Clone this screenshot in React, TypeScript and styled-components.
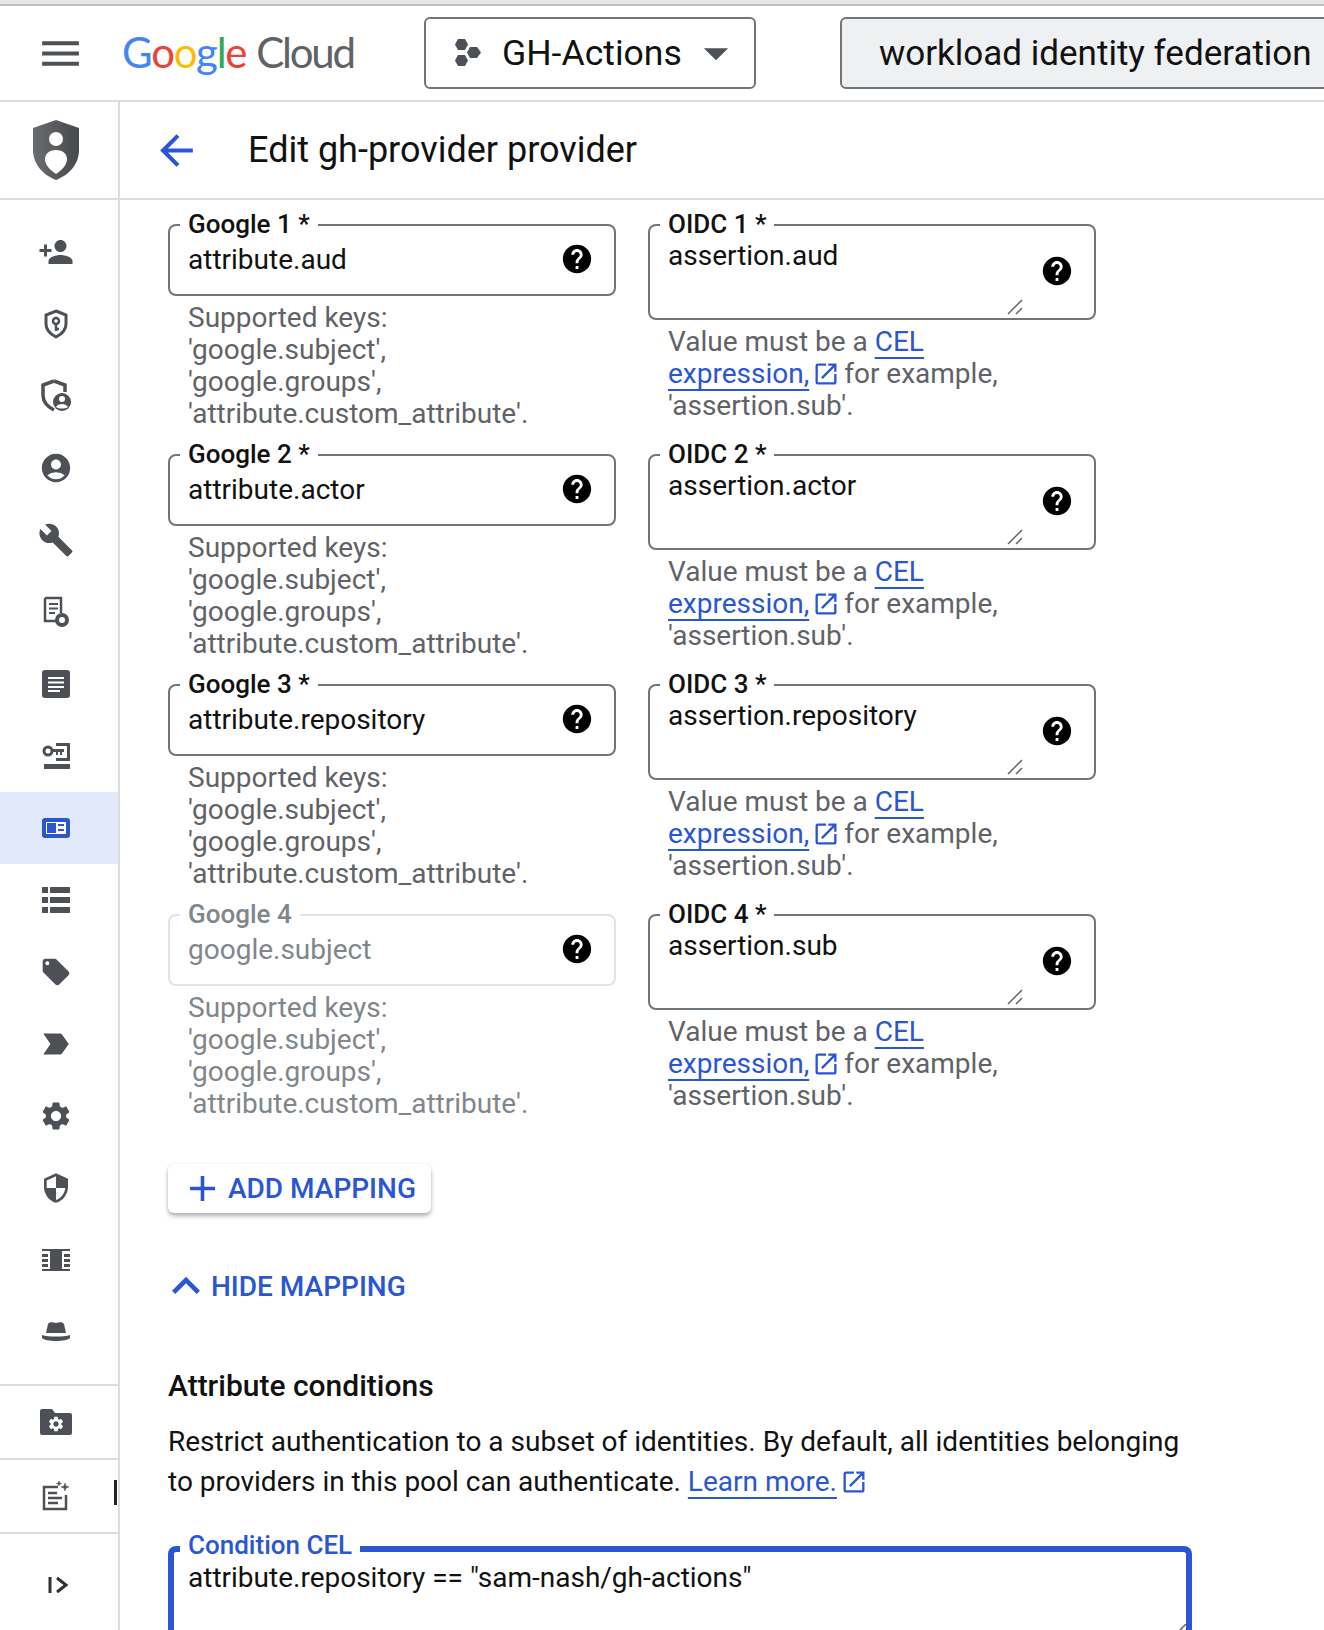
import styled, { createGlobalStyle } from "styled-components";
import {
  MdAccountCircle,
  MdAdd,
  MdArrowBack,
  MdArrowDropDown,
  MdBuild,
  MdExpandLess,
  MdHelp,
  MdLabelImportant,
  MdLocalOffer,
  MdMenu,
  MdOpenInNew,
  MdPersonAdd,
  MdSecurity,
  MdSettings,
} from "react-icons/md";

const BLUE = "#2a56d3";
const GREY = "#5f6368";
const ICON = "#4d5156";

const GlobalStyle = createGlobalStyle`
  html, body {
    margin: 0;
    padding: 0;
    background: #fff;
    font-family: Roboto, "Liberation Sans", sans-serif;
    color: #111;
  }
`;

const Page = styled.div`
  width: 1324px;
  height: 1630px;
  overflow: hidden;
  display: flex;
  flex-direction: column;
  position: relative;
`;

const TopStrip = styled.div`
  height: 4px;
  flex: none;
  background: #e6e6e6;
  border-bottom: 2px solid #bdc1c6;
`;

const Header = styled.header`
  height: 94px;
  flex: none;
  display: flex;
  align-items: center;
  border-bottom: 2px solid #dadce0;
  white-space: nowrap;
  overflow: hidden;
  padding-left: 36px;
  color: #111;
`;

const MenuIcon = styled(MdMenu)`
  flex: none;
  color: ${ICON};
`;

const Logo = styled.div`
  flex: none;
  margin: -2px 0 0 37px;
  width: 302px;
  font-family: Lato, "Open Sans", sans-serif;
  font-size: 42px;
  letter-spacing: -1.3px;
  line-height: 1;
`;

const Letter = styled.span<{ $c: string }>`
  color: ${(p) => p.$c};
`;

const Cloud = styled.span`
  color: ${GREY};
  margin-left: 10px;
  letter-spacing: -2.2px;
`;

const HeaderBox = styled.div<{ $filled?: boolean }>`
  height: 72px;
  box-sizing: border-box;
  flex: none;
  display: flex;
  align-items: center;
  border: 2px solid #70757a;
  border-radius: 6px;
  background: ${(p) => (p.$filled ? "#eff0f2" : "#fff")};
`;

const ProjectBox = styled(HeaderBox)`
  width: 332px;
  padding-left: 28px;
  gap: 18px;
  font-size: 35.6px;
`;

const DropArrow = styled(MdArrowDropDown)`
  flex: none;
  margin-left: -13px;
  color: ${ICON};
`;

const SearchBox = styled(HeaderBox)`
  margin-left: 84px;
  width: 600px;
  padding-left: 37px;
  font-size: 35px;
`;

const Body = styled.div`
  flex: 1;
  display: flex;
  min-height: 0;
`;

const Rail = styled.nav`
  width: 118px;
  flex: none;
  border-right: 2px solid #dadce0;
  display: flex;
  flex-direction: column;
`;

const RailLogo = styled.div`
  height: 96px;
  flex: none;
  display: flex;
  align-items: center;
  justify-content: center;
  padding-right: 6px;
  border-bottom: 2px solid #dadce0;
`;

const RailList = styled.div`
  padding-top: 16px;
  display: flex;
  flex-direction: column;
  height: 1184px;
  box-sizing: border-box;
  flex: none;
`;

const RailItem = styled.div<{ $active?: boolean }>`
  height: 72px;
  flex: none;
  display: flex;
  align-items: center;
  justify-content: center;
  padding-right: 6px;
  color: ${(p) => (p.$active ? BLUE : ICON)};
  background: ${(p) => (p.$active ? "#e1e9fa" : "transparent")};
`;

const RailFoot = styled.div<{ $h: number }>`
  height: ${(p) => p.$h}px;
  flex: none;
  display: flex;
  align-items: center;
  justify-content: center;
  padding-right: 6px;
  border-top: 2px solid #dadce0;
  box-sizing: border-box;
  color: ${ICON};
`;

const Cursor = styled.div`
  position: absolute;
  left: 114px;
  top: 1480px;
  width: 3px;
  height: 25px;
  background: #222;
`;

const Main = styled.main`
  flex: 1;
  min-width: 0;
  display: flex;
  flex-direction: column;
`;

const TitleBar = styled.div`
  height: 96px;
  flex: none;
  display: flex;
  align-items: center;
  border-bottom: 2px solid #dadce0;
  padding-left: 32px;
  color: ${BLUE};
`;

const Title = styled.h1`
  margin: 0 0 0 47px;
  font-size: 36px;
  font-weight: 400;
  color: #111;
`;

const Content = styled.div`
  padding: 24px 0 0 48px;
`;

const MappingGrid = styled.div`
  display: grid;
  grid-template-columns: 448px 448px;
  column-gap: 32px;
  grid-auto-rows: 230px;
  width: 928px;
`;

const FieldBox = styled.div<{ $tall?: boolean; $disabled?: boolean }>`
  position: relative;
  box-sizing: border-box;
  height: ${(p) => (p.$tall ? 96 : 72)}px;
  border: 2px solid ${(p) => (p.$disabled ? "#e0e2e5" : "#70757a")};
  border-radius: 8px;
  padding: ${(p) => (p.$tall ? "14px" : "18px")} 18px 0;
  font-size: 28px;
  line-height: 32px;
  color: ${(p) => (p.$disabled ? "#80868b" : "#111")};
`;

const FieldLabel = styled.label<{ $disabled?: boolean; $focus?: boolean }>`
  position: absolute;
  left: ${(p) => (p.$focus ? 6 : 10)}px;
  top: ${(p) => (p.$focus ? -21 : -16)}px;
  padding: 0 8px;
  background: #fff;
  font-size: 26px;
  line-height: 28px;
  font-weight: 500;
  color: ${(p) => (p.$focus ? BLUE : p.$disabled ? "#80868b" : "#111")};
`;

const HelpIcon = styled.span<{ $tall?: boolean }>`
  position: absolute;
  right: 20px;
  top: ${(p) => (p.$tall ? 28 : 16)}px;
  display: flex;
  color: #000;
`;

const Grip = styled.svg`
  position: absolute;
  right: 70px;
  bottom: 2px;
`;

const Helper = styled.div<{ $disabled?: boolean }>`
  margin: 6px 0 0 20px;
  font-size: 28px;
  line-height: 32px;
  color: ${(p) => (p.$disabled ? "#80868b" : GREY)};
`;

const HelperLink = styled.a`
  color: ${BLUE};
  text-decoration: underline;
  text-underline-offset: 6px;
  text-decoration-thickness: 2px;
`;

const ExternalIcon = styled(MdOpenInNew)`
  color: ${BLUE};
  vertical-align: -5px;
  margin: 0 4px 0 3px;
`;

const AddButton = styled.button`
  margin-top: 20px;
  display: flex;
  align-items: center;
  gap: 4px;
  width: 263px;
  height: 49px;
  padding: 0 0 0 13px;
  border: 0;
  border-radius: 6px;
  background: #fff;
  color: ${BLUE};
  font: 500 28px Roboto, sans-serif;
  box-shadow: 0 3px 4px rgba(60, 64, 67, 0.4), 0 0 2px rgba(60, 64, 67, 0.08);
`;

const PlusIcon = styled(MdAdd)`
  flex: none;
`;

const HideRow = styled.div`
  margin-top: 49px;
  display: flex;
  align-items: center;
  height: 48px;
  color: ${BLUE};
  font-size: 28px;
  font-weight: 500;
`;

const Chevron = styled(MdExpandLess)`
  flex: none;
  margin: 0 -3px 0 -10px;
`;

const SectionTitle = styled.h2`
  margin: 59px 0 0;
  font-size: 30px;
  line-height: 34px;
  font-weight: 500;
  color: #111;
`;

const Paragraph = styled.p`
  margin: 19px 0 0;
  width: 1030px;
  font-size: 28px;
  line-height: 40px;
  color: #111;
`;

const ConditionBox = styled.div`
  position: relative;
  box-sizing: border-box;
  margin-top: 44px;
  width: 1024px;
  height: 200px;
  border: 6px solid ${BLUE};
  border-bottom: 0;
  border-radius: 8px 8px 0 0;
  padding: 10px 14px 0;
  font-size: 28px;
  line-height: 32px;
  color: #111;
`;

const CornerGrip = styled.svg`
  position: absolute;
  right: 0;
  top: 72px;
`;

const CollapseSvg = styled.svg`
  margin-left: 6px;
`;

function ProjectHexes() {
  return (
    <svg width="30" height="30" viewBox="0 0 30 30" fill={ICON}>
      <path d="M4 1h7l3 5.5-3 5.500H4L1 6.500z" />
      <path d="M4 17h7l3 5.500L11 28H4l-3-5.500z" />
      <path d="M16 9h7l4 5.500-4 5.500h-7l-3-5.500z" />
    </svg>
  );
}

function ShieldLogo() {
  return (
    <svg width="50" height="60" viewBox="0 0 50 60">
      <defs>
        <linearGradient id="sh" x1="0" x2="1" y1="0" y2="0">
          <stop offset="0" stopColor="#6a6d70" />
          <stop offset="1" stopColor="#46484b" />
        </linearGradient>
      </defs>
      <path d="M25 0 48 8v22c0 14-10 25-23 30C12 55 2 44 2 30V8z" fill="url(#sh)" />
      <circle cx="25" cy="19" r="7" fill="#fff" />
      <path d="M25 30c7 0 11 4 11 9 0 6-5 11-11 15-6-4-11-9-11-15 0-5 4-9 11-9z" fill="#fff" />
    </svg>
  );
}

function KeyShield() {
  return (
    <svg width="30" height="30" viewBox="0 0 30 30" fill="none" stroke={ICON}>
      <path d="M15 2 25 6v9c0 6-4 10-10 13C9 25 5 21 5 15V6z" strokeWidth="3" />
      <circle cx="15" cy="12" r="3" strokeWidth="2.500" />
      <path d="M15 15v7M15 20h3" strokeWidth="2.500" />
    </svg>
  );
}

function UserShield() {
  return (
    <svg width="30" height="34" viewBox="0 0 30 34">
      <path d="M13 2 24 6v7M13 2 2 6v10c0 7 5 12 11 15" fill="none" stroke={ICON} strokeWidth="3.500" />
      <circle cx="21" cy="23" r="9" fill={ICON} />
      <circle cx="21" cy="20" r="3" fill="#fff" />
      <path d="M15 28c2-4 10-4 12 0-3 2-9 2-12 0z" fill="#fff" />
    </svg>
  );
}

function DocSearch() {
  return (
    <svg width="26" height="32" viewBox="0 0 26 32">
      <path d="M2 2h16v15M2 2v23h11" fill="none" stroke={ICON} strokeWidth="2.500" />
      <path d="M6 8h9M6 12.500h9M6 17h6" stroke={ICON} strokeWidth="2" />
      <circle cx="19" cy="24" r="7" fill={ICON} />
      <circle cx="19" cy="24" r="3" fill="#fff" />
    </svg>
  );
}

function ArticleBox() {
  return (
    <svg width="28" height="28" viewBox="0 0 28 28">
      <rect width="28" height="28" rx="3" fill={ICON} />
      <path d="M6 8h16M6 12.500h16M6 17h16M6 21h12" stroke="#fff" strokeWidth="2" />
    </svg>
  );
}

function KeyBox() {
  return (
    <svg width="28" height="26" viewBox="0 0 28 26" fill={ICON}>
      <path d="M2 21h26v5H2z" />
      <path d="M14 0h14v18H14v-3h11V3H14z" />
      <circle cx="6" cy="8" r="4" fill="none" stroke={ICON} strokeWidth="3" />
      <path d="M10 6h12v3h-2v3h-2V9h-2v3h-2V9h-4z" />
    </svg>
  );
}

function CardIcon() {
  return (
    <svg width="28" height="20" viewBox="0 0 28 20">
      <rect width="28" height="20" rx="3" fill={BLUE} />
      <rect x="4" y="4" width="20" height="12" fill="#fff" />
      <rect x="5" y="5" width="9" height="10" fill={BLUE} />
      <path d="M16 6h6v2h-6zM16 11h6v2h-6z" fill={BLUE} />
    </svg>
  );
}

function ListIcon() {
  return (
    <svg width="28" height="26" viewBox="0 0 28 26" fill={ICON}>
      <path d="M0 0h6v6H0zM8 0h20v6H8zM0 10h6v6H0zM8 10h20v6H8zM0 20h6v6H0zM8 20h20v6H8z" />
    </svg>
  );
}

function FilmIcon() {
  return (
    <svg width="28" height="22" viewBox="0 0 28 22" fill={ICON}>
      <path d="M0 0h28v2H0zM0 20h28v2H0z" />
      <rect x="8" y="2" width="12" height="18" />
      <path d="M0 5h6v3H0zM0 10h6v3H0zM0 15h6v3H0zM22 5h6v3h-6zM22 10h6v3h-6zM22 15h6v3h-6z" />
    </svg>
  );
}

function HatIcon() {
  return (
    <svg width="28" height="22" viewBox="0 0 28 22" fill={ICON}>
      <path d="M4 12 6 3c3-3 5-1 8-1s5-2 8 1l2 9z" />
      <path d="M0 14c6 2 22 2 28 0v3c-3 4-25 4-28 0z" />
    </svg>
  );
}

function FolderGear() {
  return (
    <svg width="32" height="26" viewBox="0 0 32 26">
      <path d="M2 0h10l3 4h15a2 2 0 0 1 2 2v18a2 2 0 0 1-2 2H2a2 2 0 0 1-2-2V2a2 2 0 0 1 2-2z" fill={ICON} />
      <MdSettings x="7" y="6" size={18} color="#fff" />
    </svg>
  );
}

function SparkleDoc() {
  return (
    <svg width="28" height="30" viewBox="0 0 28 30" fill="none" stroke={ICON}>
      <path d="M16 6H2v22h22V14" strokeWidth="2.500" />
      <path d="M6 12h9M6 17h14M6 22h10" strokeWidth="2.500" />
      <path d="M23 2l1 3 3 1-3 1-1 3-1-3-3-1 3-1zM17 0l.7 1.800 1.800.7-1.800.7-.7 1.800-.7-1.800-1.800-.7 1.800-.7z" fill={ICON} strokeWidth="0.500" />
    </svg>
  );
}

function CollapseIcon() {
  return (
    <CollapseSvg width="22" height="20" viewBox="0 0 22 20" fill="none" stroke="#2f3134" strokeWidth="3">
      <path d="M2 2v16M9 3l9 7-9 7" />
    </CollapseSvg>
  );
}

const railItems = [
  <MdPersonAdd size={36} />,
  <KeyShield />,
  <UserShield />,
  <MdAccountCircle size={34} />,
  <MdBuild size={36} />,
  <DocSearch />,
  <ArticleBox />,
  <KeyBox />,
  <CardIcon />,
  <ListIcon />,
  <MdLocalOffer size={32} />,
  <MdLabelImportant size={36} />,
  <MdSettings size={34} />,
  <MdSecurity size={32} />,
  <FilmIcon />,
  <HatIcon />,
];

const mappings = [
  { google: "attribute.aud", oidc: "assertion.aud", required: true },
  { google: "attribute.actor", oidc: "assertion.actor", required: true },
  { google: "attribute.repository", oidc: "assertion.repository", required: true },
  { google: "google.subject", oidc: "assertion.sub", required: false },
];

function App() {
  return (
    <Page>
      <GlobalStyle />
      <TopStrip />
      <Header>
        <MenuIcon size={49} />
        <Logo>
          <Letter $c="#4285f4">G</Letter>
          <Letter $c="#ea4335">o</Letter>
          <Letter $c="#fbbc05">o</Letter>
          <Letter $c="#4285f4">g</Letter>
          <Letter $c="#34a853">l</Letter>
          <Letter $c="#ea4335">e</Letter>
          <Cloud>Cloud</Cloud>
        </Logo>
        <ProjectBox>
          <ProjectHexes />
          <span>GH-Actions</span>
          <DropArrow size={58} />
        </ProjectBox>
        <SearchBox $filled>workload identity federation</SearchBox>
      </Header>
      <Body>
        <Rail>
          <RailLogo>
            <ShieldLogo />
          </RailLogo>
          <RailList>
            {railItems.map((icon, i) => (
              <RailItem key={i} $active={i === 8}>
                {icon}
              </RailItem>
            ))}
          </RailList>
          <RailFoot $h={74}>
            <FolderGear />
          </RailFoot>
          <RailFoot $h={74}>
            <SparkleDoc />
          </RailFoot>
          <RailFoot $h={104}>
            <CollapseIcon />
          </RailFoot>
        </Rail>
        <Main>
          <TitleBar>
            <MdArrowBack size={49} />
            <Title>Edit gh-provider provider</Title>
          </TitleBar>
          <Content>
            <MappingGrid>
              {mappings.map((m, i) => [
                <div key={`g${i}`}>
                  <FieldBox $disabled={!m.required}>
                    <FieldLabel $disabled={!m.required}>
                      Google {i + 1}
                      {m.required ? " *" : ""}
                    </FieldLabel>
                    {m.google}
                    <HelpIcon>
                      <MdHelp size={34} />
                    </HelpIcon>
                  </FieldBox>
                  <Helper $disabled={!m.required}>
                    Supported keys:
                    <br />
                    'google.subject',
                    <br />
                    'google.groups',
                    <br />
                    'attribute.custom_attribute'.
                  </Helper>
                </div>,
                <div key={`o${i}`}>
                  <FieldBox $tall>
                    <FieldLabel>OIDC {i + 1} *</FieldLabel>
                    {m.oidc}
                    <HelpIcon $tall>
                      <MdHelp size={34} />
                    </HelpIcon>
                    <Grip width="18" height="18" viewBox="0 0 18 18" stroke="#5f6368" fill="none">
                      <path d="M2 16 16 2M10 16l6-6" strokeWidth="1.500" />
                    </Grip>
                  </FieldBox>
                  <Helper>
                    Value must be a <HelperLink>CEL</HelperLink>
                    <br />
                    <HelperLink>expression,</HelperLink>
                    <ExternalIcon size={28} />
                    for example,
                    <br />
                    'assertion.sub'.
                  </Helper>
                </div>,
              ])}
            </MappingGrid>
            <AddButton>
              <PlusIcon size={43} />
              ADD MAPPING
            </AddButton>
            <HideRow>
              <Chevron size={56} />
              HIDE MAPPING
            </HideRow>
            <SectionTitle>Attribute conditions</SectionTitle>
            <Paragraph>
              Restrict authentication to a subset of identities. By default, all identities belonging to providers in
              this pool can authenticate. <HelperLink>Learn more.</HelperLink>
              <ExternalIcon size={28} />
            </Paragraph>
            <ConditionBox>
              <FieldLabel $focus>Condition CEL</FieldLabel>
              attribute.repository == "sam-nash/gh-actions"
              <CornerGrip width="14" height="14" viewBox="0 0 14 14" stroke="#5f6368" fill="none">
                <path d="M0 14 14 0" strokeWidth="1.500" />
              </CornerGrip>
            </ConditionBox>
          </Content>
        </Main>
      </Body>
      <Cursor />
    </Page>
  );
}

export default App;
